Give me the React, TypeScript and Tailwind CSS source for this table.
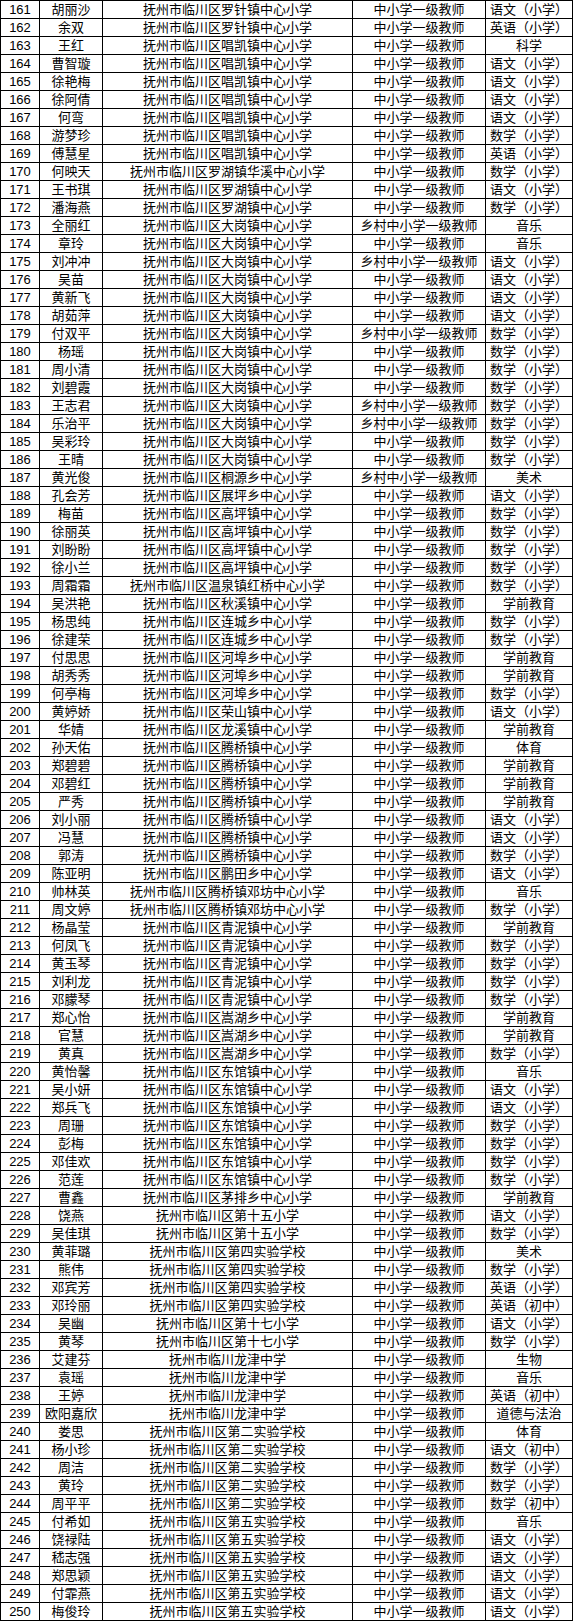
const P = '抚州市临川区';
const Z = '中小学一级教师';
const X = '乡村中小学一级教师';

// [name, school suffix, title, subject]; a school starting with '!' is written out in full
const ROWS: [string, string, string, string][] = [
  ['胡丽沙', '罗针镇中心小学', Z, '语文（小学）'],
  ['余双', '罗针镇中心小学', Z, '英语（小学）'],
  ['王红', '唱凯镇中心小学', Z, '科学'],
  ['曹智璇', '唱凯镇中心小学', Z, '语文（小学）'],
  ['徐艳梅', '唱凯镇中心小学', Z, '语文（小学）'],
  ['徐阿倩', '唱凯镇中心小学', Z, '语文（小学）'],
  ['何弯', '唱凯镇中心小学', Z, '语文（小学）'],
  ['游梦珍', '唱凯镇中心小学', Z, '数学（小学）'],
  ['傅慧星', '唱凯镇中心小学', Z, '英语（小学）'],
  ['何映天', '罗湖镇华溪中心小学', Z, '数学（小学）'],
  ['王书琪', '罗湖镇中心小学', Z, '语文（小学）'],
  ['潘海燕', '罗湖镇中心小学', Z, '数学（小学）'],
  ['全丽红', '大岗镇中心小学', X, '音乐'],
  ['章玲', '大岗镇中心小学', Z, '音乐'],
  ['刘冲冲', '大岗镇中心小学', X, '语文（小学）'],
  ['吴苗', '大岗镇中心小学', Z, '语文（小学）'],
  ['黄新飞', '大岗镇中心小学', Z, '语文（小学）'],
  ['胡茹萍', '大岗镇中心小学', Z, '语文（小学）'],
  ['付双平', '大岗镇中心小学', X, '数学（小学）'],
  ['杨瑶', '大岗镇中心小学', Z, '数学（小学）'],
  ['周小清', '大岗镇中心小学', Z, '数学（小学）'],
  ['刘碧霞', '大岗镇中心小学', Z, '数学（小学）'],
  ['王志君', '大岗镇中心小学', X, '数学（小学）'],
  ['乐治平', '大岗镇中心小学', X, '数学（小学）'],
  ['吴彩玲', '大岗镇中心小学', Z, '数学（小学）'],
  ['王晴', '大岗镇中心小学', Z, '数学（小学）'],
  ['黄光俊', '桐源乡中心小学', X, '美术'],
  ['孔会芳', '展坪乡中心小学', Z, '语文（小学）'],
  ['梅苗', '高坪镇中心小学', Z, '数学（小学）'],
  ['徐丽英', '高坪镇中心小学', Z, '数学（小学）'],
  ['刘盼盼', '高坪镇中心小学', Z, '数学（小学）'],
  ['徐小兰', '高坪镇中心小学', Z, '数学（小学）'],
  ['周霜霜', '温泉镇红桥中心小学', Z, '数学（小学）'],
  ['吴洪艳', '秋溪镇中心小学', Z, '学前教育'],
  ['杨思纯', '连城乡中心小学', Z, '数学（小学）'],
  ['徐建荣', '连城乡中心小学', Z, '数学（小学）'],
  ['付思思', '河埠乡中心小学', Z, '学前教育'],
  ['胡秀秀', '河埠乡中心小学', Z, '学前教育'],
  ['何亭梅', '河埠乡中心小学', Z, '数学（小学）'],
  ['黄婷娇', '荣山镇中心小学', Z, '语文（小学）'],
  ['华婧', '龙溪镇中心小学', Z, '学前教育'],
  ['孙天佑', '腾桥镇中心小学', Z, '体育'],
  ['郑碧碧', '腾桥镇中心小学', Z, '学前教育'],
  ['邓碧红', '腾桥镇中心小学', Z, '学前教育'],
  ['严秀', '腾桥镇中心小学', Z, '学前教育'],
  ['刘小丽', '腾桥镇中心小学', Z, '语文（小学）'],
  ['冯慧', '腾桥镇中心小学', Z, '语文（小学）'],
  ['郭涛', '腾桥镇中心小学', Z, '数学（小学）'],
  ['陈亚明', '鹏田乡中心小学', Z, '语文（小学）'],
  ['帅林英', '腾桥镇邓坊中心小学', Z, '音乐'],
  ['周文婷', '腾桥镇邓坊中心小学', Z, '数学（小学）'],
  ['杨晶莹', '青泥镇中心小学', Z, '学前教育'],
  ['何凤飞', '青泥镇中心小学', Z, '数学（小学）'],
  ['黄玉琴', '青泥镇中心小学', Z, '数学（小学）'],
  ['刘利龙', '青泥镇中心小学', Z, '数学（小学）'],
  ['邓朦琴', '青泥镇中心小学', Z, '数学（小学）'],
  ['郑心怡', '嵩湖乡中心小学', Z, '学前教育'],
  ['官慧', '嵩湖乡中心小学', Z, '学前教育'],
  ['黄真', '嵩湖乡中心小学', Z, '数学（小学）'],
  ['黄怡馨', '东馆镇中心小学', Z, '音乐'],
  ['吴小妍', '东馆镇中心小学', Z, '语文（小学）'],
  ['郑兵飞', '东馆镇中心小学', Z, '语文（小学）'],
  ['周珊', '东馆镇中心小学', Z, '数学（小学）'],
  ['彭梅', '东馆镇中心小学', Z, '数学（小学）'],
  ['邓佳欢', '东馆镇中心小学', Z, '数学（小学）'],
  ['范莲', '东馆镇中心小学', Z, '数学（小学）'],
  ['曹鑫', '茅排乡中心小学', Z, '学前教育'],
  ['饶燕', '第十五小学', Z, '语文（小学）'],
  ['吴佳琪', '第十五小学', Z, '数学（小学）'],
  ['黄菲璐', '第四实验学校', Z, '美术'],
  ['熊伟', '第四实验学校', Z, '数学（小学）'],
  ['邓宾芳', '第四实验学校', Z, '英语（小学）'],
  ['邓玲丽', '第四实验学校', Z, '英语（初中）'],
  ['吴幽', '第十七小学', Z, '语文（小学）'],
  ['黄琴', '第十七小学', Z, '数学（小学）'],
  ['艾建芬', '!抚州市临川龙津中学', Z, '生物'],
  ['袁瑶', '!抚州市临川龙津中学', Z, '音乐'],
  ['王婷', '!抚州市临川龙津中学', Z, '英语（初中）'],
  ['欧阳嘉欣', '!抚州市临川龙津中学', Z, '道德与法治'],
  ['娄思', '第二实验学校', Z, '体育'],
  ['杨小珍', '第二实验学校', Z, '语文（初中）'],
  ['周洁', '第二实验学校', Z, '数学（小学）'],
  ['黄玲', '第二实验学校', Z, '数学（小学）'],
  ['周平平', '第二实验学校', Z, '数学（初中）'],
  ['付希如', '第五实验学校', Z, '音乐'],
  ['饶禄陆', '第五实验学校', Z, '语文（小学）'],
  ['嵇志强', '第五实验学校', Z, '语文（小学）'],
  ['郑思颖', '第五实验学校', Z, '语文（小学）'],
  ['付霏燕', '第五实验学校', Z, '语文（小学）'],
  ['梅俊玲', '第五实验学校', Z, '语文（小学）'],
];

const cell = 'h-[18px] border-r border-b border-black flex items-center justify-center whitespace-nowrap overflow-hidden';

export default function App() {
  return (
    <div className="bg-white w-[576px] h-[1621px] text-black text-[13px] leading-[17px] font-['Liberation_Sans','Noto_Sans_CJK_SC',sans-serif]">
      <div className="w-[573px] border-l border-t border-black grid grid-cols-[39px_63px_250px_133px_87px]">
        {ROWS.map(([name, school, title, subject], i) => (
          <div key={i} className="contents">
            <div className={cell}>{161 + i}</div>
            <div className={cell}>{name}</div>
            <div className={cell}>{school.startsWith('!') ? school.slice(1) : P + school}</div>
            <div className={cell}>{title}</div>
            <div className={cell}>{subject}</div>
          </div>
        ))}
      </div>
    </div>
  );
}
